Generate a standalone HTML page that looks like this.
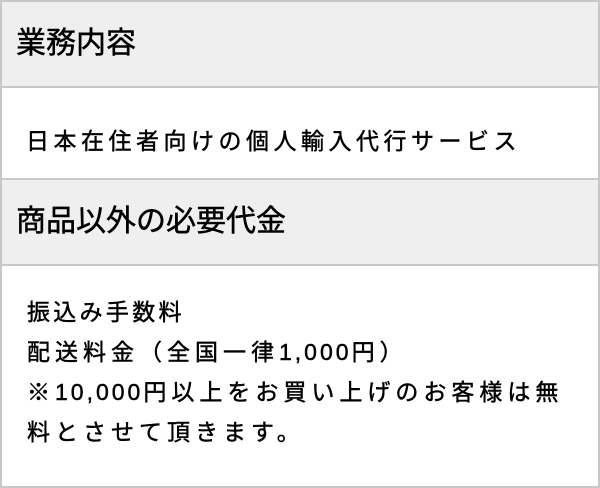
<!DOCTYPE html>
<html><head><meta charset="utf-8"><style>
html,body{margin:0;padding:0;background:#fff;}
body{width:600px;height:482px;overflow:hidden;font-family:"Liberation Sans","Noto Sans CJK JP",sans-serif;color:#000;-webkit-text-stroke:0.45px #000;}
.box{position:absolute;left:0;top:0;width:596px;height:484px;border:2px solid #c8c8c8;}
.h{position:absolute;left:0;width:596px;background:#efefef;font-size:30px;line-height:1;}
.h span{position:absolute;left:14px;}
.line{position:absolute;left:0;width:596px;height:2px;background:#c8c8c8;}
.t{position:absolute;white-space:nowrap;}
.d{letter-spacing:3px;}
</style></head><body>
<div class="box">
<div class="h" style="top:0;height:84px;"><span style="top:27px;">業務内容</span></div>
<div class="line" style="top:84px"></div>
<div class="t" style="left:24px;top:120px;font-size:23px;letter-spacing:4.5px;">日本在住者向けの個人輸入代行サービス</div>
<div class="line" style="top:176px"></div>
<div class="h" style="top:178px;height:84px;"><span style="top:27px;">商品以外の必要代金</span></div>
<div class="line" style="top:262px"></div>
<div class="t" style="left:25px;top:290px;font-size:23px;letter-spacing:5px;line-height:40px;"><span style="letter-spacing:3.3px">振込み手数料</span><br>配送料金（全国一律<span class="d">1,000</span>円）<br>※<span class="d">10,000</span>円以上をお買い上げのお客様は無<br>料とさせて頂きます。</div>
</div>
</body></html>
